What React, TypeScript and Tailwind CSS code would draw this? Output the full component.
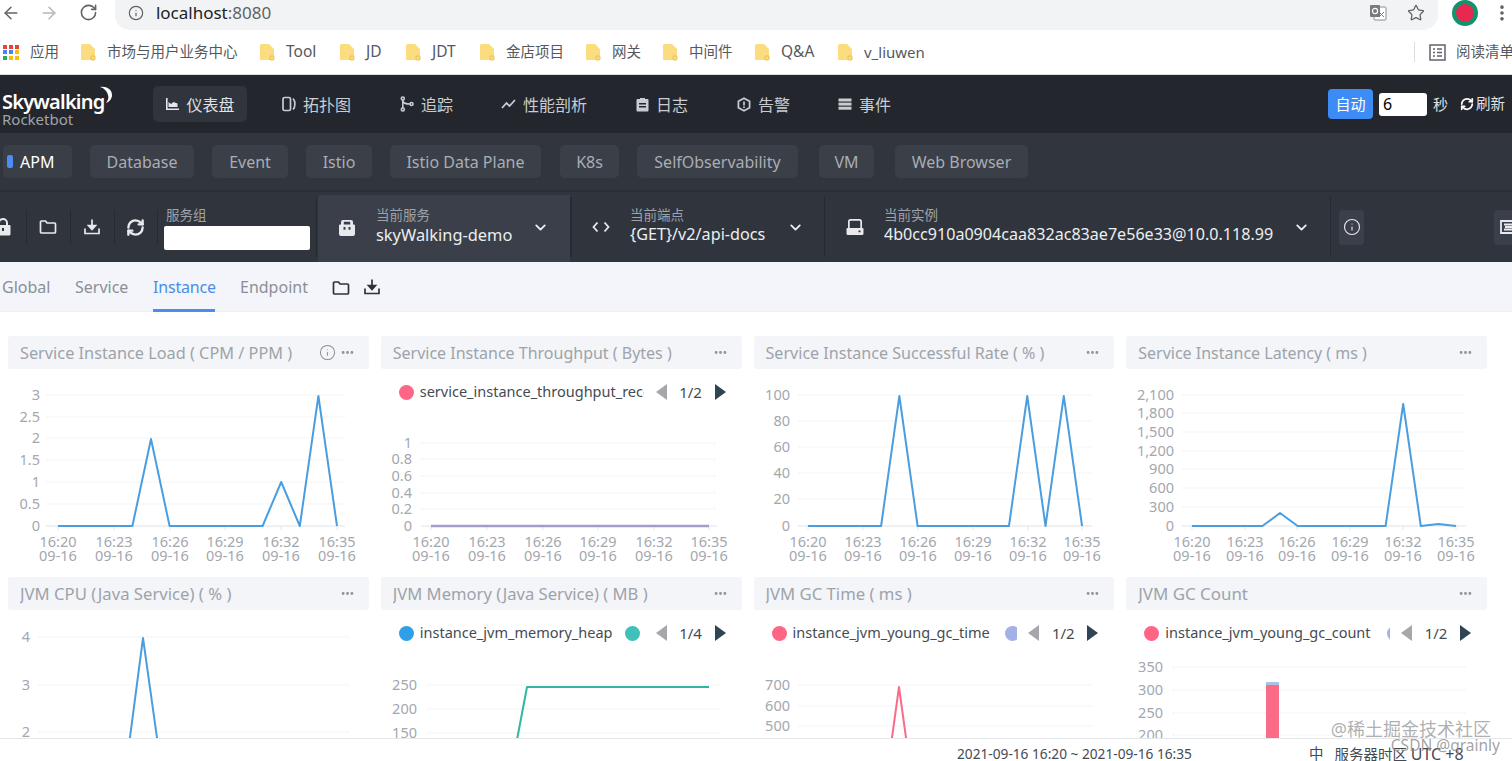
import { ArrowLeft, ArrowRight, ChevronDown, Ellipsis, EllipsisVertical, Info, RefreshCw, RotateCw, Star } from "lucide-react";

const FONT = "font-['Noto_Sans','Noto_Sans_CJK_SC',sans-serif]";

const bookmarks = [
  { name: "市场与用户业务中心", w: "w-[131px]" },
  { name: "Tool", w: "w-[32px] text-[15.5px]" },
  { name: "JD", w: "w-[18px] text-[15.5px]" },
  { name: "JDT", w: "w-[26px] text-[15.5px]" },
  { name: "金店项目", w: "w-[58px]" },
  { name: "网关", w: "w-[29px]" },
  { name: "中间件", w: "w-[44px]" },
  { name: "Q&A", w: "w-[35px] text-[15.5px]" },
  { name: "v_liuwen", w: "w-[60px] text-[15px]" },
];

const layers = [
  { name: "Database", w: "w-[104px] ml-[18px]" },
  { name: "Event", w: "w-[76px] ml-[18px]" },
  { name: "Istio", w: "w-[66px] ml-[18px]" },
  { name: "Istio Data Plane", w: "w-[151px] ml-[18px]" },
  { name: "K8s", w: "w-[59px] ml-[19px]" },
  { name: "SelfObservability", w: "w-[161px] ml-[18px]" },
  { name: "VM", w: "w-[55px] ml-[21px]" },
  { name: "Web Browser", w: "w-[133px] ml-[21px]" },
];

function Folder() {
  return (
    <svg width="16" height="18" viewBox="0 0 16 18" className="shrink-0">
      <path d="M1 2.5A1.5 1.5 0 0 1 2.5 1h7.5l5 5v10a1 1 0 0 1-1 1H2a1 1 0 0 1-1-1z" fill="#fbdc7e" />
      <rect x="11" y="13" width="4" height="4" rx="1" fill="none" stroke="#e8bf50" />
    </svg>
  );
}

function FolderLine({ className = "" }: { className?: string }) {
  return (
    <svg width="18" height="16" viewBox="0 0 18 16" fill="none" stroke="currentColor" strokeWidth="1.7" className={className}>
      <path d="M1.5 3a1 1 0 0 1 1-1h4l1.500 2h7.500a1 1 0 0 1 1 1v8a1 1 0 0 1-1 1h-13a1 1 0 0 1-1-1z" />
    </svg>
  );
}

function DownloadLine({ className = "" }: { className?: string }) {
  return (
    <svg width="18" height="18" viewBox="0 0 18 18" fill="none" stroke="currentColor" strokeWidth="1.7" className={className}>
      <path d="M9 1.500v9" />
      <path d="M5.500 7.500h7L9 11.500z" fill="currentColor" />
      <path d="M2 10.500v5h14v-5" />
    </svg>
  );
}

function NavIcon({ kind }: { kind: string }) {
  if (kind === "dash")
    return (
      <svg width="14" height="14" viewBox="0 0 14 14" fill="#e5e7eb">
        <path d="M1 1h1.600v10.400H14V13H1z" />
        <path d="M3.500 10V5l2.500 2 2.500-2 4 1.500V10z" />
      </svg>
    );
  if (kind === "topo")
    return (
      <svg width="14" height="16" viewBox="0 0 14 16" fill="none" stroke="#c9ccd2" strokeWidth="1.700">
        <rect x="1" y="1.500" width="7.500" height="13" rx="1.500" />
        <path d="M11 2.500c2.500 2.500 2.500 8.500 0 11" />
      </svg>
    );
  if (kind === "trace")
    return (
      <svg width="14" height="16" viewBox="0 0 14 16" fill="none" stroke="#c9ccd2" strokeWidth="1.600">
        <circle cx="2.800" cy="2.500" r="1.500" />
        <circle cx="2.800" cy="13.500" r="1.500" />
        <circle cx="11.500" cy="8" r="1.500" />
        <path d="M2.800 4v8M2.800 5c.5 2.500 3 3 7.200 3" />
      </svg>
    );
  if (kind === "perf")
    return (
      <svg width="15" height="12" viewBox="0 0 15 12" fill="none" stroke="#c9ccd2" strokeWidth="1.800">
        <path d="m1 10 4.500-5 3 3L14 2" />
      </svg>
    );
  if (kind === "log")
    return (
      <svg width="13" height="15" viewBox="0 0 13 15" fill="#c9ccd2">
        <path fillRule="evenodd" d="M1.500 2H4V1h5v1h2.500a1 1 0 0 1 1 1v10.500a1 1 0 0 1-1 1h-10a1 1 0 0 1-1-1V3a1 1 0 0 1 1-1zM3 6v1.400h7V6zm0 3v1.400h7V9z" />
      </svg>
    );
  if (kind === "alarm")
    return (
      <svg width="14" height="15" viewBox="0 0 14 15" fill="none" stroke="#c9ccd2" strokeWidth="1.700">
        <path d="M7 1.200 12.600 4.300v6.400L7 13.800 1.400 10.700V4.300z" />
        <path d="M7 4.500v4M7 9.600v1.400" />
      </svg>
    );
  return (
    <svg width="14" height="12" viewBox="0 0 14 12" fill="#c9ccd2">
      <rect x="0.500" y="0.500" width="13" height="3" />
      <rect x="0.500" y="4.600" width="13" height="3" />
      <rect x="0.500" y="8.700" width="13" height="3" />
    </svg>
  );
}

function Bag({ className = "" }: { className?: string }) {
  return (
    <svg width="18" height="17" viewBox="0 0 18 17" fill="currentColor" className={className}>
      <path fillRule="evenodd" d="M5 1h8a2 2 0 0 1 2 2v2.500h1a1 1 0 0 1 1 1V15a2 2 0 0 1-2 2H3a2 2 0 0 1-2-2V6.500a1 1 0 0 1 1-1h1V3a2 2 0 0 1 2-2zm.8 1.800v2.700h6.400V2.800zM5.500 8v2.800h2V8zm5 0v2.800h2V8z" />
    </svg>
  );
}

function NavItem({ kind, label, className }: { kind: string; label: string; className: string }) {
  return (
    <div className={`flex h-9 items-center gap-[7px] rounded-[5px] text-[16px] text-[#c9ccd2] ${className}`}>
      <NavIcon kind={kind} />
      <span className="pt-[2px]">{label}</span>
    </div>
  );
}

function Crumb({ icon, label, value, className, chevron, valueSize = "text-[16.2px]" }: { icon: React.ReactNode; label: string; value: string; className: string; chevron: string; valueSize?: string }) {
  return (
    <div className={`flex h-[67px] shrink-0 items-center self-end pb-[3px] ${className}`}>
      <div className="flex w-[58px] shrink-0 justify-center text-[#e8e9ec]">{icon}</div>
      <div className={`mb-[5px] flex flex-col leading-[19px] ${chevron}`}>
        <span className="text-[13.5px] text-[#9ea2aa]">{label}</span>
        <span className={`whitespace-nowrap text-[#eceef0] ${valueSize}`}>{value}</span>
      </div>
      <ChevronDown size={17} strokeWidth={2.6} className="text-[#eceef0]" />
    </div>
  );
}

type ChartProps = {
  ox: number;
  oy: number;
  top: number;
  yTicks: [string, number][];
  labelX: number;
  gridL: number;
  gridR: number;
  xLabels?: number[];
  series?: { color: string; width?: number; points: [number, number][] }[];
  bar?: boolean;
};

// coordinates below are the page's own, the viewBox shifts them into the card
function Chart({ ox, oy, top, yTicks, labelX, gridL, gridR, xLabels, series = [], bar }: ChartProps) {
  const times = ["16:20", "16:23", "16:26", "16:29", "16:32", "16:35"];
  return (
    <svg width="361" height={oy + 208 - top} viewBox={`${ox} ${top} 361 ${oy + 208 - top}`} className="block" fontSize="14.5" fill="#a3a7ae">
      {yTicks.map(([label, y]) => (
        <g key={label}>
          <line x1={gridL} x2={gridR} y1={y} y2={y} stroke="#f0f1f3" strokeDasharray="3 1" />
          <text x={labelX} y={y + 4.500} textAnchor="end">{label}</text>
        </g>
      ))}
      {xLabels?.map((x, i) => (
        <g key={x} textAnchor="middle">
          <line x1={x} x2={x} y1={oy + 157} y2={oy + 161} stroke="#e3e5e8" />
          <text x={x} y={oy + 178}>{times[i]}</text>
          <text x={x} y={oy + 192}>09-16</text>
        </g>
      ))}
      {xLabels && (
        <line x1={gridL} x2={gridR} y1={oy + 157} y2={oy + 157} stroke="#e6e8eb" />
      )}
      {series.map((s) => (
        <polyline key={s.color} points={s.points.map((p) => p.join(",")).join(" ")} fill="none" stroke={s.color} strokeWidth={s.width ?? 2} strokeLinejoin="round" />
      ))}
      {bar && (
        <>
          <rect x="1266" y="685" width="13" height="60" fill="#fb6a86" />
          <rect x="1266" y="682" width="13" height="3" fill="#a8c4e0" />
        </>
      )}
    </svg>
  );
}

function Legend({ dot, name, nameW, second, page, secondClip }: { dot: string; name: string; nameW: string; second?: string; page: string; secondClip?: string }) {
  return (
    <div className="flex h-[46px] items-center pr-[16px] pl-[18px]">
      <span className="h-[15px] w-[15px] shrink-0 rounded-full" style={{ background: dot }} />
      <span className={`ml-[6px] shrink-0 overflow-hidden text-[14.5px] whitespace-nowrap text-[#444b52] ${nameW}`}>{name}</span>
      {second && (
        <span className={`h-[15px] shrink-0 overflow-hidden ${secondClip}`}>
          <span className="block h-[15px] w-[15px] rounded-full" style={{ background: second }} />
        </span>
      )}
      <span className="ml-auto flex items-center gap-[12px]">
        <span className="h-0 w-0 border-y-[8px] border-r-[11px] border-y-transparent border-r-[#a5a7aa]" />
        <span className="w-[24px] text-center text-[15px] text-[#444b52]">{page}</span>
        <span className="h-0 w-0 border-y-[8px] border-l-[11px] border-y-transparent border-l-[#2f4554]" />
      </span>
    </div>
  );
}

function Card({ title, titleSize = "text-[16px]", info, legend, children }: { title: string; titleSize?: string; info?: boolean; legend?: React.ReactNode; children: React.ReactNode }) {
  return (
    <div className="h-[241px] min-w-0 overflow-hidden">
      <div className="flex h-[33px] items-center rounded-[3px] bg-[#f3f5f9] pr-[14px] pl-[12px]">
        <span className={`flex-1 truncate leading-[24px] text-[#9ea3aa] ${titleSize}`}>{title}</span>
        {info && <Info size={17} strokeWidth={1.500} className="mr-[4px] text-[#8c9097]" />}
        <Ellipsis size={15} strokeWidth={2.600} className="text-[#8c9097]" />
      </div>
      {legend}
      {children}
    </div>
  );
}

const pts = (x0: number, step: number, base: number, peaks: Record<number, number>) =>
  Array.from({ length: 16 }, (_, i) => [x0 + step * i, peaks[i] ?? base] as [number, number]);

const X1 = [58, 114, 170, 225, 281, 337];
const X2 = [431, 487, 543, 598, 654, 709];
const X3 = [808, 863, 918, 973, 1028, 1082];
const X4 = [1192, 1245, 1297, 1350, 1403, 1456];

export default function App() {
  return (
    <div className={`flex h-[761px] w-[1512px] flex-col overflow-hidden bg-white ${FONT}`}>
      {/* browser chrome */}
      <div className="flex h-[30px] items-start">
        <ArrowLeft size={20} strokeWidth={1.800} className="mt-[3px] ml-[1px] text-[#5f6368]" />
        <ArrowRight size={20} strokeWidth={1.800} className="mt-[3px] ml-[18px] text-[#b5b7ba]" />
        <RotateCw size={19} strokeWidth={2} className="mt-[3px] ml-[20px] text-[#5f6368]" />
        <div className="ml-[17px] flex h-[30px] w-[1325px] items-center rounded-br-[15px] rounded-bl-[15px] bg-[#f1f3f4] pb-[4px]">
          <Info size={16} strokeWidth={1.800} className="ml-[13px] text-[#5f6368]" />
          <span className="ml-[12px] text-[17px] text-[#202124]">localhost<span className="text-[#5f6368]">:8080</span></span>
          <div className="mr-[13px] ml-auto flex items-center gap-[20px]">
            <svg width="18" height="18" viewBox="0 0 18 18">
              <rect x="5" y="3" width="12" height="13" rx="1" fill="#fff" stroke="#8a8d91" />
              <rect x="1" y="1" width="10" height="12" rx="1" fill="#777b80" />
              <circle cx="6" cy="7" r="2.600" fill="none" stroke="#fff" strokeWidth="1.200" />
              <path d="m10 8 5 5M15 8l-5 5" stroke="#777b80" />
            </svg>
            <Star size={18} strokeWidth={1.700} className="text-[#5f6368]" />
          </div>
        </div>
        <span className="ml-[14px] flex h-[26px] w-[26px] items-center justify-center rounded-full border-[4px] border-[#12936f] bg-[#e8284f]" />
        <EllipsisVertical size={20} strokeWidth={2.400} className="mt-[3px] ml-[14px] text-[#5f6368]" />
      </div>
      <div className="flex h-[45px] items-center border-b border-[#dadce0] text-[14.5px] text-[#55595e]">
        <div className="ml-[3px] grid w-[16px] shrink-0 grid-cols-3 gap-[1.500px]">
          {["#ea4335", "#ea4335", "#ea4335", "#4285f4", "#4285f4", "#fbbc05", "#34a853", "#fbbc05", "#fbbc05"].map((c, i) => (
            <span key={i} className="h-[4px] w-[4px]" style={{ background: c }} />
          ))}
        </div>
        <span className="ml-[11px] w-[29px] whitespace-nowrap">应用</span>
        <div className="ml-[21px] flex items-center gap-[21px]">
          {bookmarks.map((b) => (
            <div key={b.name} className="flex items-center gap-[11px]">
              <Folder />
              <span className={`whitespace-nowrap ${b.w}`}>{b.name}</span>
            </div>
          ))}
        </div>
        <div className="ml-auto flex items-center whitespace-nowrap">
          <span className="h-[20px] w-px bg-[#dadce0]" />
          <svg width="17" height="17" viewBox="0 0 17 17" fill="none" stroke="#5f6368" strokeWidth="1.500" className="ml-[14px]">
            <rect x="1" y="1" width="15" height="15" />
            <path d="M4 5h2M8 5h5M4 8.500h2M8 8.500h5M4 12h2M8 12h5" />
          </svg>
          <span className="ml-[10px] w-[56px] overflow-hidden">阅读清单</span>
        </div>
      </div>

      {/* top nav */}
      <div className="flex h-[58px] shrink-0 items-center bg-[#23272d]">
        <div className="relative mt-[11px] ml-[2px] w-[120px] leading-none">
          <div className="text-[20px] font-semibold tracking-[-0.800px] text-white">Skywalking</div>
          <div className="text-[15px] text-[#a0a3a8]">Rocketbot</div>
          <svg width="14" height="20" viewBox="0 0 14 18" className="absolute top-[-7px] left-[97px]" fill="#fff">
            <path d="M1 1c6-1 12 2 12 8 0 4-3 7-6 8 2-3 3-5 2-8-1-4-4-7-8-8z" />
          </svg>
        </div>
        <NavItem kind="dash" label="仪表盘" className="ml-[31px] w-[94px] justify-center bg-[#2f343d] text-[#dfe1e4]" />
        <NavItem kind="topo" label="拓扑图" className="ml-[35px]" />
        <NavItem kind="trace" label="追踪" className="ml-[49px]" />
        <NavItem kind="perf" label="性能剖析" className="ml-[48px]" />
        <NavItem kind="log" label="日志" className="ml-[49px]" />
        <NavItem kind="alarm" label="告警" className="ml-[49px]" />
        <NavItem kind="event" label="事件" className="ml-[48px]" />
        <div className="ml-auto flex items-center pr-[7px] text-white">
          <button className="h-[30px] w-[45px] rounded-[4px] bg-[#3d8bf5] text-[15px]">自动</button>
          <span className="ml-[6px] flex h-[23px] w-[48px] items-center rounded-[3px] bg-white pl-[4px] text-[16px] text-black">6</span>
          <span className="ml-[6px] text-[15px] text-[#dfe1e4]">秒</span>
          <RefreshCw size={14} strokeWidth={3} className="ml-[12px]" />
          <span className="ml-[2px] text-[14.500px] text-[#dfe1e4]">刷新</span>
        </div>
      </div>

      {/* layer tabs */}
      <div className="flex h-[59px] shrink-0 items-start border-b-[2px] border-[#2a2e35] bg-[#31363e] pt-[12px] pl-[3px]">
        <div className="flex h-[33px] w-[69px] items-center rounded-[5px] bg-[#393e47] pl-[4px] text-[16px] text-white">
          <span className="h-[13px] w-[6px] rounded-[2px] bg-[#4b8df5]" />
          <span className="ml-[7px]">APM</span>
        </div>
        {layers.map((l) => (
          <div key={l.name} className={`flex h-[33px] items-center justify-center rounded-[5px] bg-[#3a3f48] text-[16px] whitespace-nowrap text-[#a9adb5] ${l.w}`}>
            {l.name}
          </div>
        ))}
      </div>

      {/* selectors */}
      <div className="flex h-[70px] shrink-0 items-center bg-[#30353d] text-[#e8e9ec]">
        <div className="relative h-[18px] w-[11px] overflow-hidden">
          <svg width="16" height="18" viewBox="0 0 16 18" fill="currentColor" className="absolute top-0 right-0">
            <path fillRule="evenodd" d="M3 7V5a5 5 0 0 1 10 0v2h1.500a1 1 0 0 1 1 1v8a1.500 1.500 0 0 1-1.500 1.500H2A1.500 1.500 0 0 1 .5 16V8a1 1 0 0 1 1-1zm2 0h6V5a3 3 0 0 0-6 0zm2 3v3h2v-3z" />
          </svg>
        </div>
        <span className="ml-[15px] h-[34px] w-px bg-[#262a30]" />
        <FolderLine className="ml-[12px]" />
        <span className="ml-[13px] h-[34px] w-px bg-[#262a30]" />
        <DownloadLine className="ml-[12px]" />
        <span className="ml-[13px] h-[34px] w-px bg-[#262a30]" />
        <RefreshCw size={19} strokeWidth={3} className="ml-[11px]" />
        <span className="ml-[12px] h-[34px] w-px bg-[#262a30]" />
        <div className="ml-[6px] flex w-[146px] flex-col">
          <span className="pl-[2px] text-[13.500px] leading-[18px] text-[#9ea2aa]">服务组</span>
          <span className="mt-[2px] mb-[-1px] h-[24px] rounded-[2px] bg-white" />
        </div>
        <span className="ml-[6px] h-[60px] w-px bg-[#262a30]" />
        <Crumb icon={<Bag />} label="当前服务" value="skyWalking-demo" valueSize="text-[16.400px]" className="ml-px w-[252px] rounded-tl-[4px] bg-[#3a3f49]" chevron="w-[156px]" />
        <span className="h-[60px] w-[2px] bg-[#262a30]" />
        <Crumb
          icon={
            <svg width="18" height="12" viewBox="0 0 18 12" fill="none" stroke="currentColor" strokeWidth="1.800">
              <path d="M5.500 1.500 1.500 6l4 4.500M12.500 1.500l4 4.500-4 4.500" />
            </svg>
          }
          label="当前端点"
          value="{GET}/v2/api-docs"
          className="w-[252px]"
          chevron="w-[157px]"
        />
        <span className="h-[60px] w-px bg-[#262a30]" />
        <Crumb
          icon={
            <svg width="18" height="18" viewBox="0 0 18 18" fill="currentColor" className="ml-px">
              <path fillRule="evenodd" d="M4.500 1h9A2.500 2.500 0 0 1 16 3.500V10h.5a1 1 0 0 1 1 1v4.500A1.500 1.500 0 0 1 16 17H2a1.500 1.500 0 0 1-1.500-1.500V11a1 1 0 0 1 1-1H2V3.500A2.500 2.500 0 0 1 4.500 1zm0 1.800a.8.8 0 0 0-.8.8V10h10.600V3.600a.8.8 0 0 0-.8-.8zM12.500 12.500v1.800h2v-1.800z" />
            </svg>
          }
          label="当前实例"
          value="4b0cc910a0904caa832ac83ae7e56e33@10.0.118.99"
          valueSize="text-[16.100px]"
          className="w-[505px]"
          chevron="ml-px w-[409px]"
        />
        <span className="h-[60px] w-px bg-[#262a30]" />
        <div className="ml-[8px] flex h-[35px] w-[25px] items-center justify-center rounded-[4px] bg-[#3a3f49]">
          <Info size={18} strokeWidth={1.500} />
        </div>
        <div className="ml-auto flex h-[35px] w-[18px] items-center justify-end rounded-l-[4px] bg-[#3a3f49]">
          <svg width="12" height="16" viewBox="0 0 12 16" fill="none" stroke="currentColor" strokeWidth="1.800">
            <path d="M12 2H1v12h11M4 5.500h8M4 10.500h8M5 8h7" />
          </svg>
        </div>
      </div>

      {/* dashboard tabs */}
      <div className="flex h-[50px] shrink-0 items-center border-b border-[#eef0f3] bg-[#f3f5fa] text-[16px] text-[#8a8f97]">
        <span className="ml-[2px] w-[49px]">Global</span>
        <span className="ml-[24px] w-[53px]">Service</span>
        <span className="ml-[25px] flex h-[50px] w-[62px] items-center border-b-[3px] border-[#4a8ee8] pt-[3px] tracking-[-0.200px] text-[#4a8ee8]">Instance</span>
        <span className="ml-[25px] w-[68px]">Endpoint</span>
        <FolderLine className="mt-[2px] ml-[24px] text-[#303338]" />
        <DownloadLine className="ml-[13px] text-[#303338]" />
      </div>

      {/* charts */}
      <div className="relative min-h-0 flex-1 overflow-hidden">
        <div className="ml-[8px] grid w-[1479px] grid-cols-4 gap-x-[12px] pt-[24px]">
          <Card title="Service Instance Load ( CPM / PPM )" titleSize="text-[16.300px]" info>
            <Chart
              ox={8} oy={369} top={369} labelX={40} gridL={46} gridR={345} xLabels={X1}
              yTicks={[["3", 395], ["2.5", 417], ["2", 438], ["1.5", 460], ["1", 482], ["0.5", 504], ["0", 526]]}
              series={[{ color: "#4a9ee0", points: pts(58, 18.600, 526, { 5: 439, 12: 482, 14: 396 }) }]}
            />
          </Card>
          <Card
            title="Service Instance Throughput ( Bytes )"
            legend={<Legend dot="#ff6584" name="service_instance_throughput_received" nameW="w-[224px]" page="1/2" />}
          >
            <Chart
              ox={381} oy={369} top={415} labelX={412} gridL={421} gridR={717} xLabels={X2}
              yTicks={[["1", 443], ["0.8", 459], ["0.6", 476], ["0.4", 493], ["0.2", 509], ["0", 526]]}
              series={[{ color: "#a79cc9", width: 2.500, points: [[431, 526], [709, 526]] }]}
            />
          </Card>
          <Card title="Service Instance Successful Rate ( % )" titleSize="text-[16.100px]">
            <Chart
              ox={754} oy={369} top={369} labelX={790} gridL={798} gridR={1092} xLabels={X3}
              yTicks={[["100", 395], ["80", 421], ["60", 447], ["40", 473], ["20", 499], ["0", 526]]}
              series={[{ color: "#4a9ee0", points: pts(808, 18.270, 526, { 5: 396, 12: 396, 14: 396 }) }]}
            />
          </Card>
          <Card title="Service Instance Latency ( ms )">
            <Chart
              ox={1126} oy={369} top={369} labelX={1174} gridL={1182} gridR={1466} xLabels={X4}
              yTicks={[["2,100", 395], ["1,800", 413], ["1,500", 432], ["1,200", 451], ["900", 469], ["600", 488], ["300", 507], ["0", 526]]}
              series={[{ color: "#4a9ee0", points: pts(1192, 17.600, 526, { 5: 513, 12: 404, 14: 524 }) }]}
            />
          </Card>

          <Card title="JVM CPU (Java Service) ( % )" titleSize="text-[16.700px]">
            <Chart
              ox={8} oy={610} top={610} labelX={30} gridL={38} gridR={350}
              yTicks={[["4", 637], ["3", 685], ["2", 732]]}
              series={[{ color: "#4a9ee0", points: [[129, 745], [143, 638], [158, 745]] }]}
            />
          </Card>
          <Card
            title="JVM Memory (Java Service) ( MB )"
            titleSize="text-[16.600px]"
            legend={<Legend dot="#2f9fe8" name="instance_jvm_memory_heap" nameW="w-[205px]" second="#3fc1ba" secondClip="w-[15px]" page="1/4" />}
          >
            <Chart
              ox={381} oy={610} top={656} labelX={417} gridL={427} gridR={720}
              yTicks={[["250", 685], ["200", 709], ["150", 733]]}
              series={[{ color: "#2fb8a0", points: [[516, 745], [527, 687], [709, 687]] }]}
            />
          </Card>
          <Card
            title="JVM GC Time ( ms )"
            titleSize="text-[16.700px]"
            legend={<Legend dot="#ff6584" name="instance_jvm_young_gc_time" nameW="w-[212px]" second="#a3b1e6" secondClip="w-[12px]" page="1/2" />}
          >
            <Chart
              ox={754} oy={610} top={656} labelX={790} gridL={798} gridR={1092}
              yTicks={[["700", 685], ["600", 706], ["500", 726]]}
              series={[{ color: "#fb6a86", points: [[891, 745], [899, 687], [907, 745]] }]}
            />
          </Card>
          <Card
            title="JVM GC Count"
            titleSize="text-[16.900px]"
            legend={<Legend dot="#ff6584" name="instance_jvm_young_gc_count" nameW="w-[222px]" second="#a3b1e6" secondClip="w-[3px]" page="1/2" />}
          >
            <Chart
              ox={1126} oy={610} top={656} labelX={1163} gridL={1172} gridR={1466}
              yTicks={[["350", 667], ["300", 690], ["250", 713], ["200", 735]]}
              bar
            />
          </Card>
        </div>
        <div className="absolute right-[21px] bottom-[0px] text-[18px] leading-none whitespace-nowrap text-[#9b9b9b]/80">@稀土掘金技术社区</div>
      </div>

      {/* footer */}
      <div className="relative flex h-[23px] shrink-0 items-center border-t border-[#e6e8eb] bg-white pt-[8px] text-[14.500px] text-[#454a52]">
        <span className="ml-[957px] w-[235px] text-[13.700px] whitespace-nowrap">2021-09-16 16:20 ~ 2021-09-16 16:35</span>
        <span className="ml-[117px]">中</span>
        <span className="ml-[11px] whitespace-nowrap">服务器时区 <span className="text-[16px]">UTC +8</span></span>
        <span className="absolute top-[-1px] right-[12px] text-[15.500px] leading-none whitespace-nowrap text-[#8b8b8b]/80">CSDN @qrainly</span>
      </div>
    </div>
  );
}
